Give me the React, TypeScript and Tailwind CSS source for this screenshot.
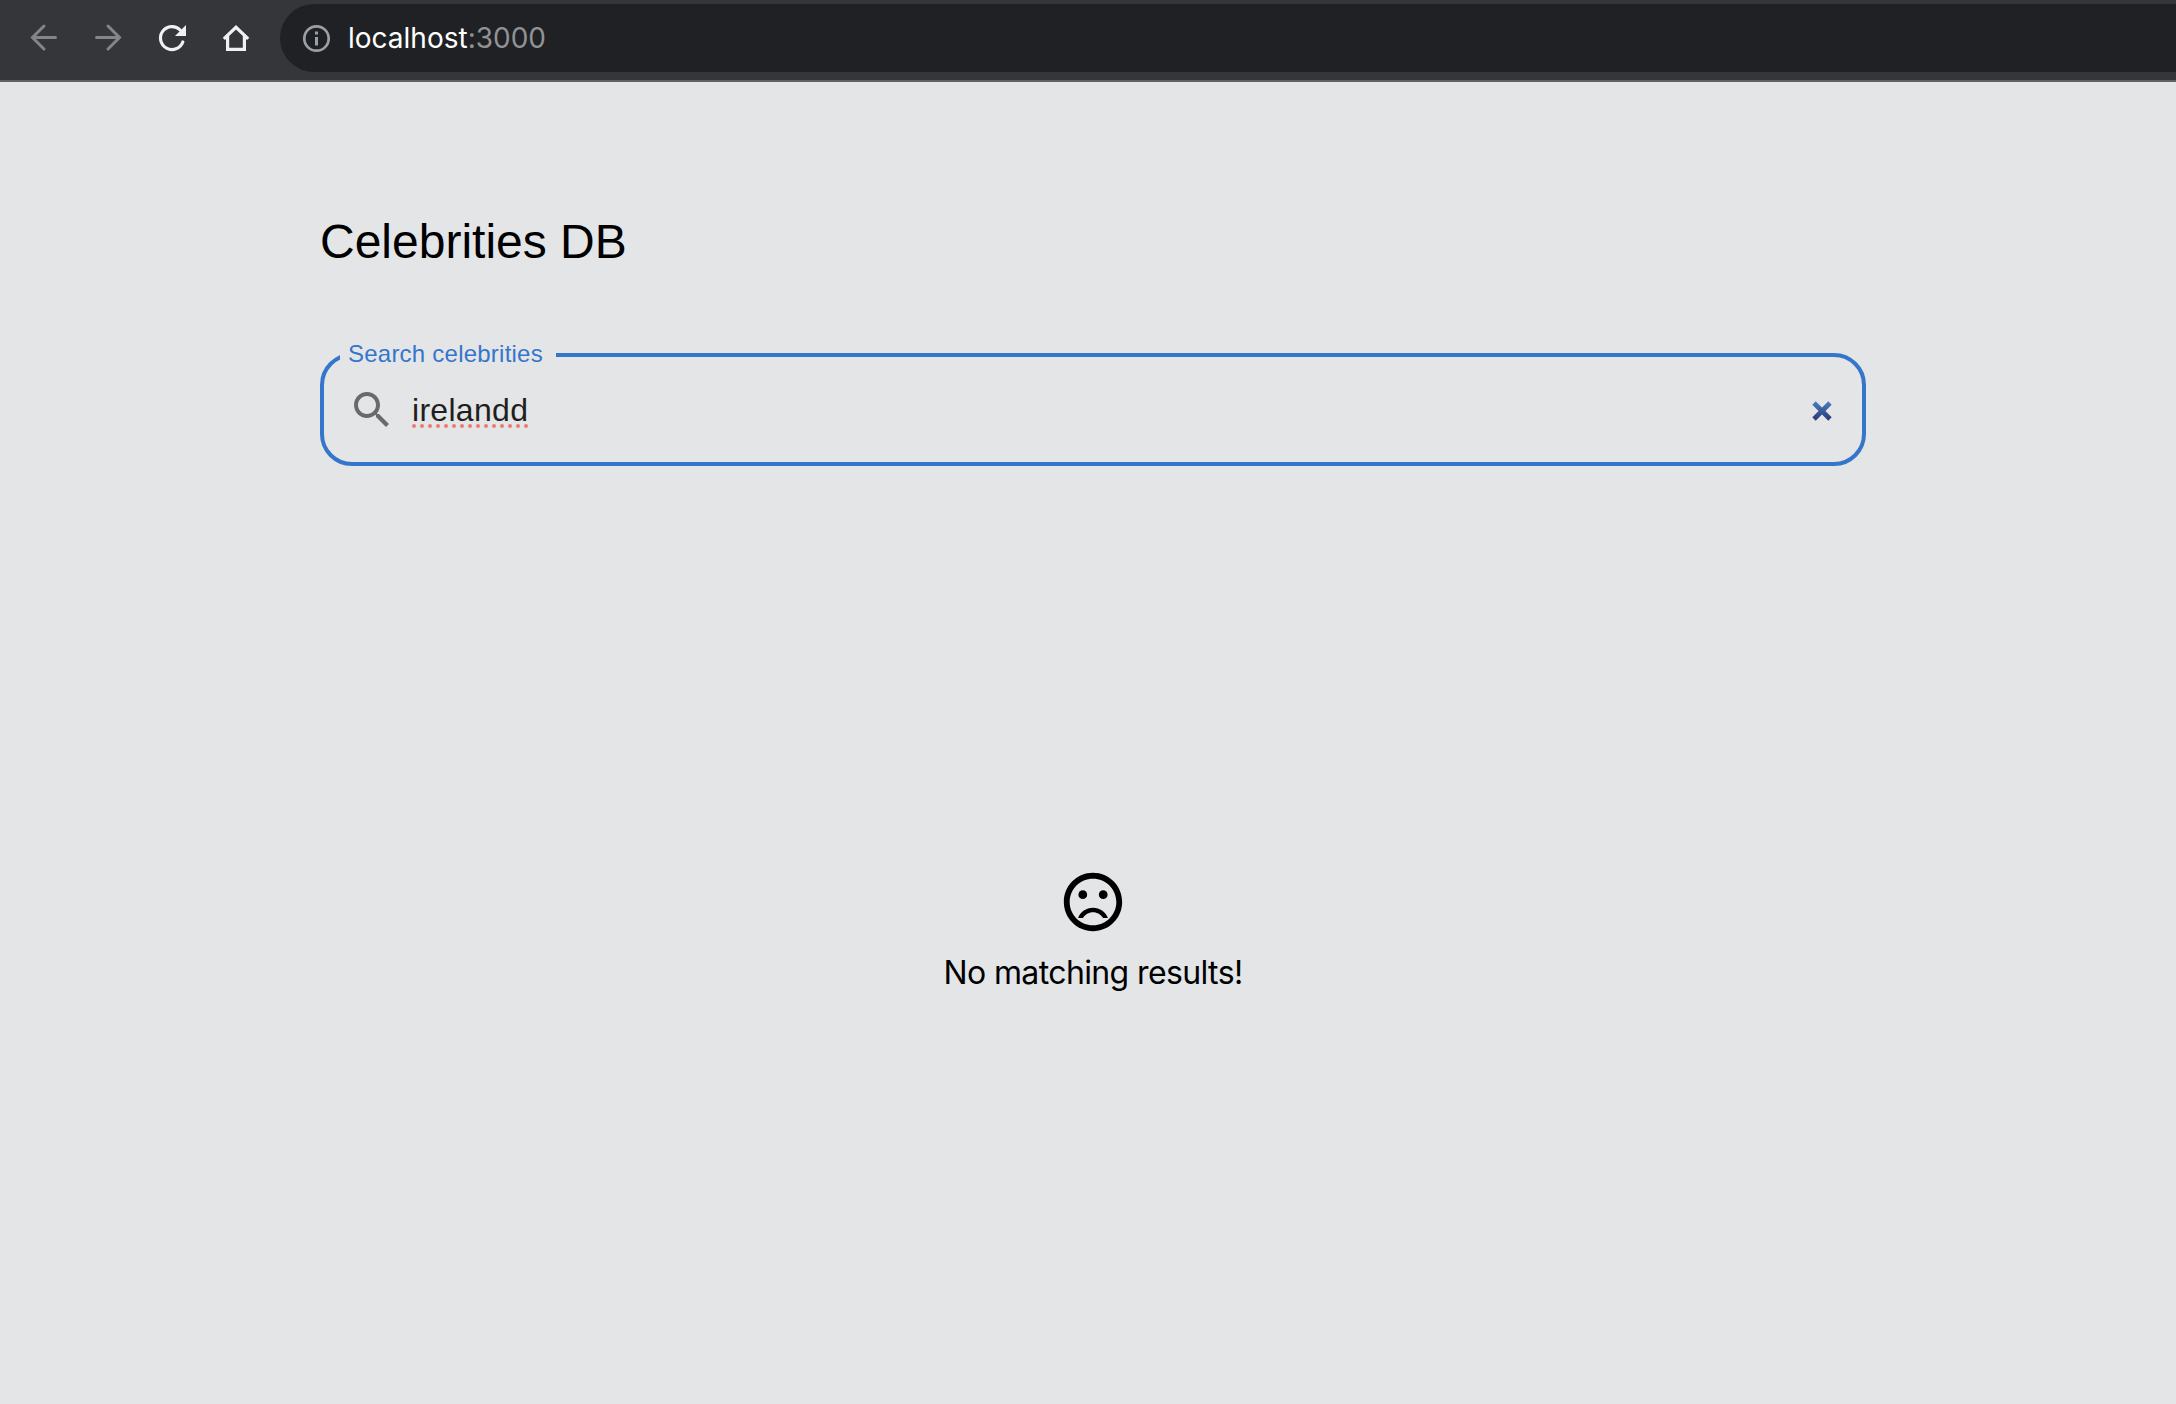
import React from "react";

function BrowserBar() {
  return (
    <header className="flex h-[82px] items-start border-b-2 border-[#616163] bg-[#35363a] pt-1">
      <div className="flex h-[68px] w-[280px] shrink-0 items-center gap-4 pl-5">
        <svg className="size-12" viewBox="0 0 48 48" fill="none" stroke="#848587" strokeWidth="3" strokeLinecap="round">
          <path d="M35.5 23.5H13M24 12L12.500 23.5L24 35" />
        </svg>
        <svg className="size-12" viewBox="0 0 48 48" fill="none" stroke="#848587" strokeWidth="3" strokeLinecap="round">
          <path d="M12.5 23.5H35M24 12L35.500 23.5L24 35" />
        </svg>
        <svg className="size-12" viewBox="0 0 48 48" fill="none" stroke="#f1f1f2" strokeWidth="3.2">
          <path d="M34.8 28A11.5 11.5 0 1 1 32.200 16" strokeLinecap="round" />
          <path d="M38 11V22H27Z" fill="#f1f1f2" stroke="none" />
        </svg>
        <svg className="size-12" viewBox="0 0 48 48" fill="none" stroke="#f1f1f2" strokeWidth="3.2">
          <path d="M11.8 24.800L24 13.300L36.200 24.800M15.600 22V35.400H32.400V22" />
        </svg>
      </div>
      <div className="flex h-[68px] flex-1 items-center rounded-l-[34px] bg-[#202124] pl-[22px]">
        <svg className="size-[29px]" viewBox="0 0 29 29" fill="none">
          <circle cx="14.5" cy="14.5" r="12.2" stroke="#9aa0a6" strokeWidth="2.7" />
          <path d="M13 7.5h3v3h-3zM13 13h3v8.500h-3z" fill="#9aa0a6" />
        </svg>
        <span className="ml-[17px] whitespace-nowrap font-['Inter'] text-[28px] leading-none text-white">
          localhost<span className="text-[#919294]">:3000</span>
        </span>
      </div>
    </header>
  );
}

function SearchField() {
  return (
    <div className="relative mt-[79px] flex h-[113px] items-center pl-7 pr-[33px]">
      <fieldset className="pointer-events-none absolute inset-x-0 -top-[9px] bottom-0 rounded-[32px] border-4 border-[#3576cb] px-4">
        <legend className="h-[22px] w-[216px] pl-2 font-['Liberation_Sans'] text-[24px] leading-[20px] tracking-[0.23px] whitespace-nowrap text-[#3576cb]">
          Search celebrities
        </legend>
      </fieldset>
      <svg className="mt-px size-12" viewBox="0 0 24 24" fill="#696a6a">
        <path d="M15.5 14h-.79l-.28-.27C15.41 12.59 16 11.110 16 9.500 16 5.910 13.090 3 9.500 3S3 5.910 3 9.500 5.910 16 9.500 16c1.610 0 3.090-.59 4.230-1.570l.27.28v.79l5 4.990L20.490 19l-4.990-5zm-6 0C7.010 14 5 11.990 5 9.500S7.010 5 9.500 5 14 7.010 14 9.500 11.990 14 9.500 14z" />
      </svg>
      <div className="relative mt-px ml-4 font-['Liberation_Sans'] text-[32px] leading-[46px] tracking-[0.3px] text-[#1f1f20]">
        irelandd
        <svg className="absolute left-0 top-[36px] h-[6px] w-[118px]" viewBox="0 0 118 6">
          <path d="M2 3H118" stroke="#ef7b70" strokeWidth="4" strokeLinecap="round" strokeDasharray="0 8" />
        </svg>
      </div>
      <svg className="mt-[3px] ml-auto size-[22px]" viewBox="0 0 22 22">
        <defs>
          <linearGradient id="clear" x1="0" y1="0" x2="0" y2="22" gradientUnits="userSpaceOnUse">
            <stop offset="0" stopColor="#4f82c8" />
            <stop offset="1" stopColor="#23346a" />
          </linearGradient>
        </defs>
        <path d="M3 3L19 19M19 3L3 19" stroke="url(#clear)" strokeWidth="4.800" />
      </svg>
    </div>
  );
}

function EmptyState() {
  return (
    <div className="mt-[401px] flex flex-col items-center text-black">
      <svg className="size-[70px]" viewBox="0 0 24 24">
        <circle cx="15.500" cy="9.500" r="1.500" />
        <circle cx="8.500" cy="9.500" r="1.500" />
        <path d="M12 14c-2.330 0-4.320 1.450-5.120 3.500h1.670c.69-1.190 1.970-2 3.450-2s2.750.81 3.450 2h1.670c-.8-2.050-2.790-3.500-5.120-3.500zm-.01-12C6.470 2 2 6.480 2 12s4.470 10 9.990 10C17.520 22 22 17.520 22 12S17.520 2 11.990 2zM12 20c-4.420 0-8-3.580-8-8s3.580-8 8-8 8 3.580 8 8-3.580 8-8 8z" />
      </svg>
      <p className="mt-4 font-['Inter'] text-[32px] leading-10 tracking-[-0.62px]">No matching results!</p>
    </div>
  );
}

export default function App() {
  return (
    <div className="h-[1404px] w-[2176px] overflow-hidden bg-[#e4e5e7]">
      <BrowserBar />
      <main className="ml-[320px] w-[1546px] pt-[128px]">
        <h1 className="font-['Liberation_Sans'] text-[48px] leading-[64px] text-black">Celebrities DB</h1>
        <SearchField />
        <EmptyState />
      </main>
    </div>
  );
}
